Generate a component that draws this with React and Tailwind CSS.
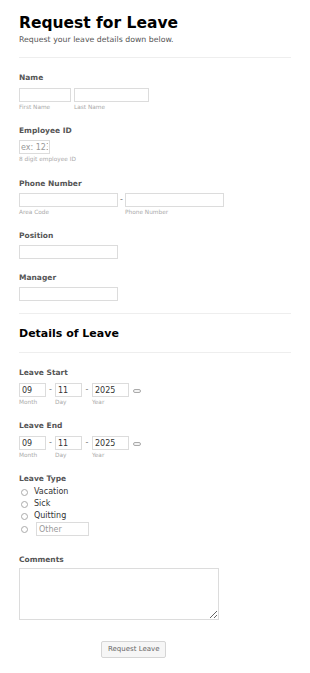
import React from 'react';

const Label = ({ children, className = '' }) => (
  <div className={`text-[7.5px] font-bold text-[#555] leading-[10px] ${className}`}>{children}</div>
);

const Sub = ({ children, className = '' }) => (
  <div className={`text-[5.8px] text-[#aaa] leading-[7px] mt-[2px] ${className}`}>{children}</div>
);

const Box = ({ className = '', value, placeholder }) => (
  <input
    readOnly
    value={value}
    placeholder={placeholder}
    className={`h-[14px] border border-[#dcdcdc] bg-white text-[8px] text-[#333] placeholder:text-[#999] outline-none ${className}`}
  />
);

const Divider = () => <div className="h-px bg-[#eeeeee]" />;

const DateRow = () => (
  <div className="flex">
    <div className="flex flex-col">
      <Box value="09" className="w-[27px] px-[2px]" />
      <Sub>Month</Sub>
    </div>
    <span className="self-start w-[9px] text-center text-[8px] text-[#777] leading-[14px]">-</span>
    <div className="flex flex-col">
      <Box value="11" className="w-[27px] px-[2px]" />
      <Sub>Day</Sub>
    </div>
    <span className="self-start w-[10px] text-center text-[8px] text-[#777] leading-[14px]">-</span>
    <div className="flex flex-col">
      <Box value="2025" className="w-[37px] px-[2px]" />
      <Sub>Year</Sub>
    </div>
    <div className="self-start mt-[6px] ml-[4px] w-[8px] h-[4px] rounded-[2px] border border-[#aaa] bg-[#f3f3f3]" />
  </div>
);

const Radio = ({ children }) => (
  <div className="flex items-center h-[12px] ml-[2px]">
    <span className="w-[7px] h-[7px] rounded-full border border-[#aaa] bg-white mr-[6px]" />
    <span className="text-[8px] text-[#333] leading-[10px]">{children}</span>
  </div>
);

export default function App() {
  return (
    <div className="min-h-[673px] bg-white px-[19px] pt-[13px]" style={{ fontFamily: '"DejaVu Sans", Verdana, sans-serif' }}>
      <div className="w-[272px]">
        <h1 className="text-[15.5px] font-bold text-black leading-[20px]">Request for Leave</h1>
        <p className="text-[7.8px] text-[#555] leading-[10px] mt-[2px]">Request your leave details down below.</p>
        <div className="mt-[12px]"><Divider /></div>

        <Label className="mt-[15px]">Name</Label>
        <div className="flex mt-[5px] gap-[3px]">
          <div className="flex flex-col">
            <Box className="w-[52px] px-[2px]" />
            <Sub>First Name</Sub>
          </div>
          <div className="flex flex-col">
            <Box className="w-[75px] px-[2px]" />
            <Sub>Last Name</Sub>
          </div>
        </div>

        <Label className="mt-[15px]">Employee ID</Label>
        <div className="flex flex-col mt-[4px]">
          <Box className="w-[31px] px-[1px]" placeholder="ex: 123" />
          <Sub>8 digit employee ID</Sub>
        </div>

        <Label className="mt-[16px]">Phone Number</Label>
        <div className="flex mt-[4px]">
          <div className="flex flex-col">
            <Box className="w-[99px] px-[2px]" />
            <Sub>Area Code</Sub>
          </div>
          <span className="text-[8px] text-[#777] leading-[14px] w-[7px] text-center">-</span>
          <div className="flex flex-col">
            <Box className="w-[99px] px-[2px]" />
            <Sub>Phone Number</Sub>
          </div>
        </div>

        <Label className="mt-[15px]">Position</Label>
        <Box className="w-[99px] px-[2px] mt-[4px] block" />

        <Label className="mt-[14px]">Manager</Label>
        <Box className="w-[99px] px-[2px] mt-[4px] block" />

        <div className="mt-[12px]"><Divider /></div>
        <h2 className="text-[11px] font-bold text-black leading-[14px] mt-[13px]">Details of Leave</h2>
        <div className="mt-[11px]"><Divider /></div>

        <Label className="mt-[15px]">Leave Start</Label>
        <div className="mt-[5px]"><DateRow /></div>

        <Label className="mt-[15px]">Leave End</Label>
        <div className="mt-[5px]"><DateRow /></div>

        <Label className="mt-[15px]">Leave Type</Label>
        <div className="mt-[2px] flex flex-col">
          <Radio>Vacation</Radio>
          <Radio>Sick</Radio>
          <Radio>Quitting</Radio>
          <div className="flex items-center ml-[2px] h-[14px]">
            <span className="w-[7px] h-[7px] rounded-full border border-[#aaa] bg-white mr-[8px]" />
            <Box className="w-[53px] px-[2px]" placeholder="Other" />
          </div>
        </div>

        <Label className="mt-[19px]">Comments</Label>
        <textarea
          readOnly
          className="block mt-[3px] w-[200px] h-[52px] border border-[#dcdcdc] bg-white resize-y outline-none"
        />

        <div className="mt-[14px] ml-[82px]">
          <button className="h-[17px] px-[6px] border border-[#d5d5d5] rounded-[2px] bg-[#f6f6f6] text-[7px] text-[#666] leading-[15px]">
            Request Leave
          </button>
        </div>
      </div>
    </div>
  );
}
